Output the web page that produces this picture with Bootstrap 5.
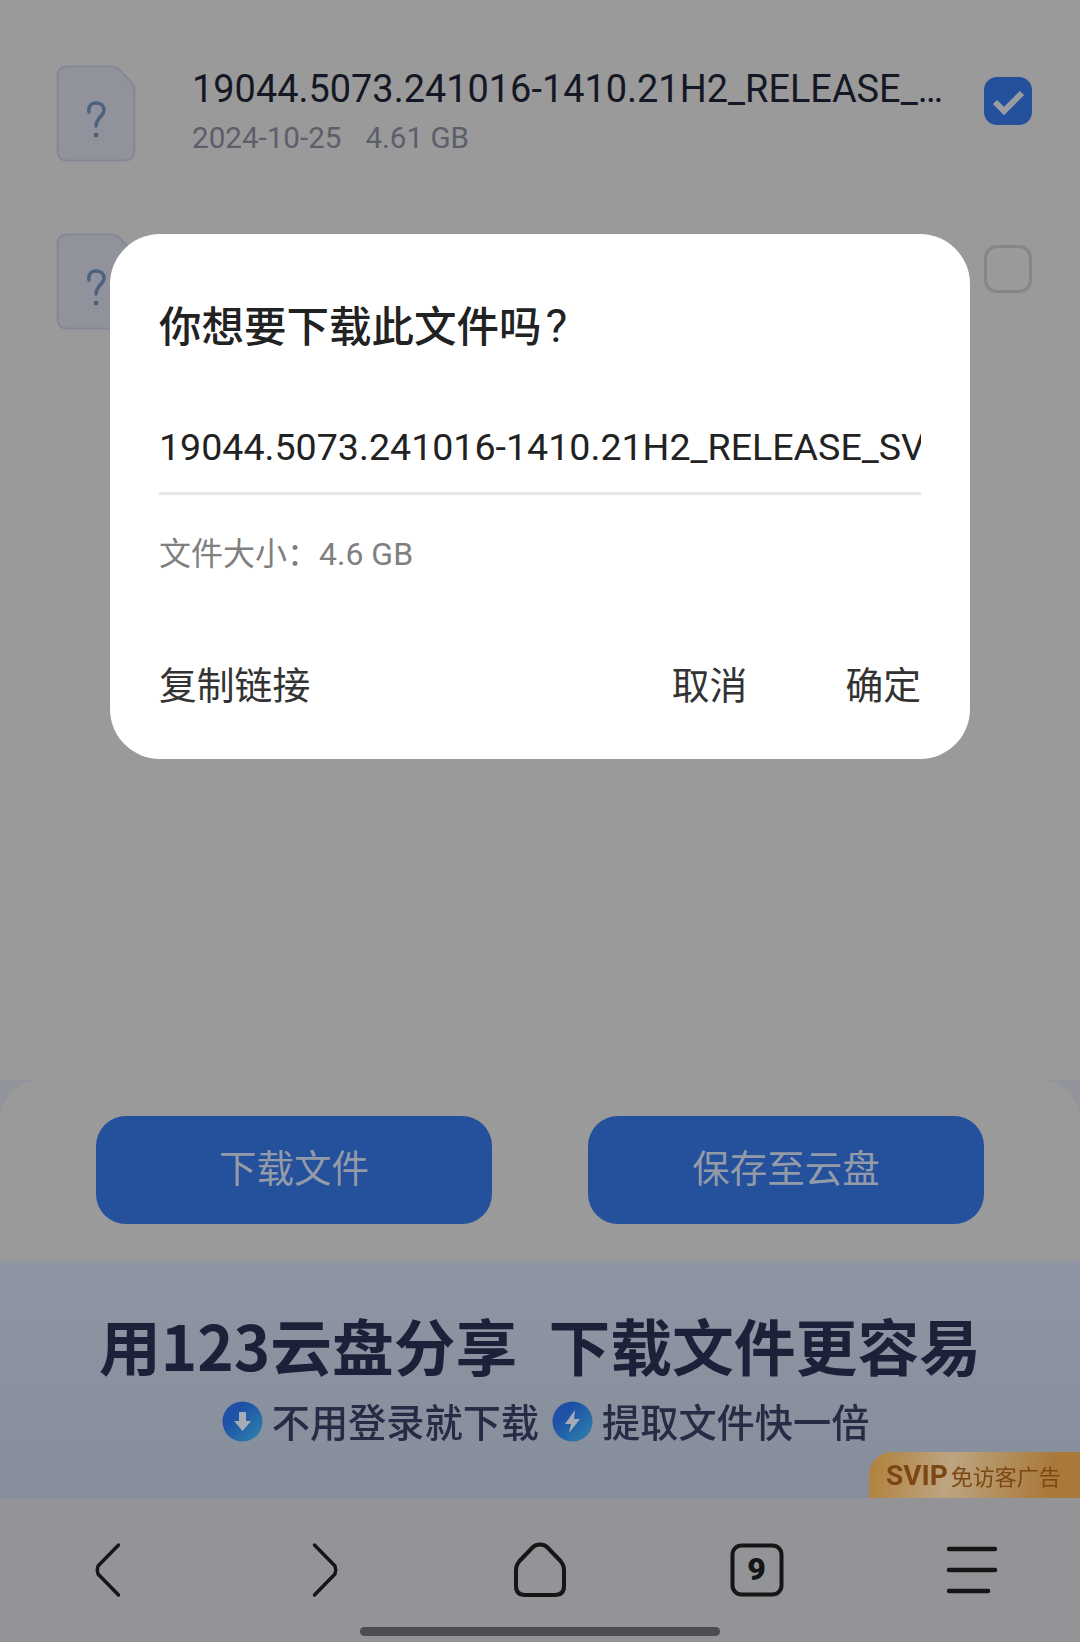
<!DOCTYPE html>
<html lang="zh-CN">
<head>
  <meta charset="UTF-8" />
  <meta name="viewport" content="width=device-width, initial-scale=1.0" />
  <title>下载文件</title>
  <link href="https://cdn.jsdelivr.net/npm/bootstrap@5.3.0/dist/css/bootstrap.min.css" rel="stylesheet">
  <style>
    html, body {
      margin: 0;
      background-color: #92949b;
    }
    body {
      font-family: Roboto, "Noto Sans CJK SC", sans-serif;
    }
    .page {
      width: 1080px;
      height: 1642px;
      overflow: hidden;
      background-color: #9a9a9a;
    }
    /* list */
    .file-list {
      padding: 29px 48px 0 56px;
      height: 1080px;
    }
    .file-row {
      height: 168px;
    }
    .file-icon {
      width: 80px;
      height: 97px;
      margin-right: 56px;
    }
    .file-name {
      font-size: 37.9px;
      line-height: 48px;
      color: #141824;
    }
    .file-meta {
      font-size: 29.6px;
      line-height: 40px;
      margin-top: 5px;
      color: #5c5e6a;
    }
    .file-meta span + span {
      margin-left: 24px;
    }
    .file-info {
      margin-right: 38px;
      padding-bottom: 3px;
    }
    .tick {
      width: 48px;
      height: 48px;
      border-radius: 13px;
      margin-top: 48px;
    }
    .tick-on {
      background-color: #24509c;
    }
    .tick-off {
      border: 3px solid #868686;
    }
    /* dialog */
    .dialog {
      top: 234px;
      left: 110px;
      width: 860px;
      height: 525px;
      padding: 66px 49px 48px 49px;
      border: 0;
      border-radius: 50px;
      background-color: #fff;
    }
    .dialog-title {
      font-size: 42.5px;
      font-weight: 500;
      line-height: 56px;
      color: #222;
      margin: 0;
    }
    .dialog-title span {
      font-size: 46px;
      font-weight: 400;
      line-height: 1;
      margin-left: 4px;
    }
    .dialog-file {
      margin-top: 66px;
      padding-bottom: 21px;
      border-bottom: 3px solid #e6e6e6;
      font-size: 37.6px;
      line-height: 50px;
      color: #222;
      white-space: nowrap;
      overflow: hidden;
    }
    .dialog-size {
      margin-top: 37px;
      font-size: 32px;
      line-height: 44px;
      color: #808080;
    }
    .dialog-actions {
      margin-top: 85px;
    }
    .act-btn {
      padding: 0;
      border: 0;
      background: none;
      font-size: 37.8px;
      line-height: 50px;
      color: #333;
    }
    .act-btn + .act-btn {
      margin-left: 98px;
    }
    /* bottom panel */
    .action-bar {
      height: 181px;
      padding: 36px 96px 0;
      gap: 96px;
      background-color: #9a9a9a;
      border-radius: 40px 40px 0 0;
    }
    .tray {
      background-color: #92949b;
    }
    .main-btn {
      width: 396px;
      height: 108px;
      border: 0;
      border-radius: 30px;
      background-color: #24509c;
      color: #939aa8;
      font-size: 37.5px;
      line-height: 106px;
      padding: 0 0 2px;
    }
    /* ad banner */
    .promo {
      height: 237px;
      background: linear-gradient(180deg, #8f96a3 0%, #868d9b 100%);
      color: #1b2138;
      font-family: "Noto Sans CJK SC", sans-serif;
    }
    .promo-title {
      padding-top: 42px;
      font-size: 61.8px;
      font-weight: 700;
      line-height: 82px;
      margin: 0;
      filter: blur(0.5px);
    }
    .promo-title span {
      margin-left: 31px;
    }
    .promo-sub {
      margin-top: 11px;
      padding-left: 11px;
      font-size: 38.2px;
      font-weight: 500;
      line-height: 50px;
      color: #262c45;
      filter: blur(0.5px);
    }
    .promo-dot {
      width: 41px;
      height: 41px;
      margin-right: 9px;
      flex: none;
    }
    .promo-sub .later {
      margin-left: 13px;
    }
    .svip {
      right: 0;
      bottom: 0;
      width: 211px;
      height: 46px;
      border-radius: 23px 0 0 0;
      background: linear-gradient(100deg, #b1803a 0%, #bda581 38%, #a9793a 85%);
      color: #7c4713;
      font-size: 22px;
      line-height: 46px;
      padding-left: 17px;
      filter: blur(0.5px);
      white-space: nowrap;
    }
    .svip b {
      font-family: Roboto, sans-serif;
      font-size: 28px;
      font-weight: 700;
      margin-right: 3px;
    }
    /* bottom nav */
    .tool-bar {
      height: 144px;
      background-color: #939497;
    }
    .tool-bar svg {
      display: block;
      position: absolute;
      top: 0;
      left: 0;
    }
    .tab-count {
      top: 46px;
      left: 731px;
      width: 51px;
      height: 52px;
      font-family: Roboto, sans-serif;
      font-size: 32px;
      font-weight: 900;
      line-height: 51px;
      color: #161616;
    }
    .home-bar {
      left: 360px;
      bottom: 6px;
      width: 360px;
      height: 9px;
      border-radius: 5px;
      background-color: #4c4d4f;
    }
  </style>
</head>
<body>
  <div class="page position-relative d-flex flex-column">

    <!-- file list -->
    <div class="file-list">
      <div class="file-row d-flex align-items-center">
        <svg class="file-icon flex-shrink-0" viewBox="0 0 80 97">
          <path d="M11 1.5H55Q60 1.5 63 4.500L75 17Q78.500 20 78.500 25V85Q78.500 95.500 68 95.500H11Q1.500 95.500 1.500 85V11Q1.500 1.500 11 1.500Z" fill="#90939c" stroke="#858995" stroke-width="2"/>
          <path d="M33 47C32 40 36 38 40 38C45 38 48 41 48 45C48 51 40 53 40 61" fill="none" stroke="#4e617f" stroke-width="3.500" stroke-linecap="round"/>
          <circle cx="40" cy="70" r="2.500" fill="#4e617f"/>
        </svg>
        <div class="file-info flex-grow-1 overflow-hidden">
          <div class="file-name text-truncate">19044.5073.241016-1410.21H2_RELEASE_SVC_REFRESH_CLIENT.iso</div>
          <div class="file-meta"><span>2024-10-25</span><span>4.61 GB</span></div>
        </div>
        <div class="tick tick-on flex-shrink-0 align-self-start">
          <svg class="d-block" width="48" height="48" viewBox="0 0 48 48"><path d="M11 25L20 34L38 16" fill="none" stroke="#9a9ca3" stroke-width="6"/></svg>
        </div>
      </div>
      <div class="file-row d-flex align-items-center">
        <svg class="file-icon flex-shrink-0" viewBox="0 0 80 97">
          <path d="M11 1.5H55Q60 1.5 63 4.500L75 17Q78.500 20 78.500 25V85Q78.500 95.500 68 95.500H11Q1.500 95.500 1.500 85V11Q1.500 1.500 11 1.500Z" fill="#90939c" stroke="#858995" stroke-width="2"/>
          <path d="M33 47C32 40 36 38 40 38C45 38 48 41 48 45C48 51 40 53 40 61" fill="none" stroke="#4e617f" stroke-width="3.500" stroke-linecap="round"/>
          <circle cx="40" cy="70" r="2.500" fill="#4e617f"/>
        </svg>
        <div class="file-info flex-grow-1 overflow-hidden"></div>
        <div class="tick tick-off flex-shrink-0 align-self-start"></div>
      </div>
    </div>

    <!-- buttons -->
    <div class="tray">
      <div class="action-bar d-flex">
        <button class="btn main-btn" type="button">下载文件</button>
        <button class="btn main-btn" type="button">保存至云盘</button>
      </div>
    </div>

    <!-- ad -->
    <div class="promo position-relative text-center">
      <h2 class="promo-title">用123云盘分享<span>下载文件更容易</span></h2>
      <div class="promo-sub d-flex justify-content-center align-items-center">
        <svg class="promo-dot" viewBox="0 0 41 41">
          <defs><linearGradient id="dotA" x1="0" y1="0" x2="1" y2="1"><stop offset="0.3" stop-color="#1d50a6"/><stop offset="1" stop-color="#2f86ad"/></linearGradient></defs>
          <circle cx="20.500" cy="20.500" r="20" fill="url(#dotA)"/>
          <path d="M17 11H24V20H29L20.500 30L12 20H17Z" fill="#a8adb5"/>
        </svg>
        <span>不用登录就下载</span>
        <svg class="promo-dot later" viewBox="0 0 41 41">
          <circle cx="20.500" cy="20.500" r="20" fill="url(#dotA)"/>
          <path d="M23 9L13 23H19L17 32L28 18H22Z" fill="#a8adb5"/>
        </svg>
        <span>提取文件快一倍</span>
      </div>
      <div class="svip position-absolute text-start"><b>SVIP</b>免访客广告</div>
    </div>

    <!-- browser toolbar -->
    <div class="tool-bar position-relative">
      <svg width="1080" height="144" viewBox="0 0 1080 144" fill="none" stroke="#161616" stroke-linecap="round" stroke-linejoin="round">
        <path d="M118.500 47L98 68Q96.500 72 98 76L118.500 97" stroke-width="3.500" />
        <path d="M314.500 47L335 68Q336.500 72 335 76L314.500 97" stroke-width="3.500" />
        <path d="M540 46.500Q535 46.500 532 50L519.500 63Q516 67 516 72V88Q516 97 525 97H555Q564 97 564 88V72Q564 67 560.500 63L548 50Q545 46.500 540 46.500Z" stroke-width="4" />
        <rect x="732.500" y="47.500" width="49" height="49" rx="9" stroke-width="4" />
        <path d="M949 51H995M949 72H995M949 93H988" stroke-width="4.500" />
      </svg>
      <div class="tab-count position-absolute text-center">9</div>
      <div class="home-bar position-absolute"></div>
    </div>

    <!-- dialog -->
    <div class="card dialog position-absolute">
      <h5 class="dialog-title">你想要下载此文件吗<span>?</span></h5>
      <div class="dialog-file">19044.5073.241016-1410.21H2_RELEASE_SVC_REFRESH_CLIENT.iso</div>
      <div class="dialog-size">文件大小：4.6 GB</div>
      <div class="dialog-actions d-flex">
        <button class="act-btn me-auto" type="button">复制链接</button>
        <button class="act-btn" type="button">取消</button>
        <button class="act-btn" type="button">确定</button>
      </div>
    </div>
  </div>
  <script src="https://cdn.jsdelivr.net/npm/bootstrap@5.3.0/dist/js/bootstrap.bundle.min.js"></script>
</body>
</html>
